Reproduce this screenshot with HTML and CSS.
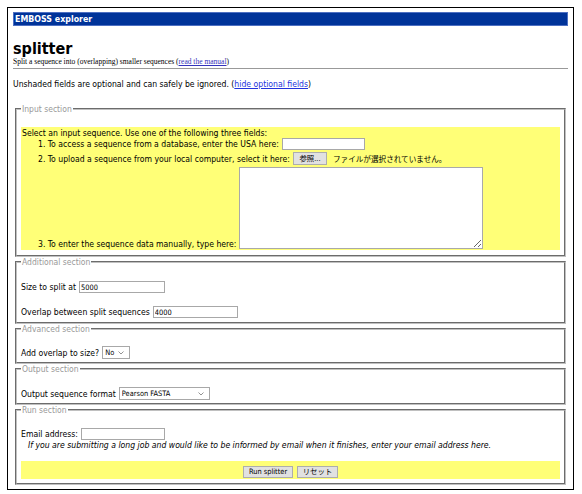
FILE: index.html
```html
<!DOCTYPE html>
<html lang="en">
<head>
<meta charset="utf-8">
<title>splitter</title>
<link rel="stylesheet" href="styles.css">
</head>
<body>
<div class="page">
  <div class="topbar">EMBOSS explorer</div>
  <h1 class="title">splitter</h1>
  <div class="subtitle">Split a sequence into (overlapping) smaller sequences (<a href="#" class="manual">read the manual</a>)</div>
  <hr class="rule">
  <p class="note">Unshaded fields are optional and can safely be ignored. (<a href="#" class="toggle">hide optional fields</a>)</p>

  <form class="form">
    <fieldset class="section section-input">
      <legend>Input section</legend>
      <div class="req input-box">
        <div class="line">Select an input sequence. Use one of the following three fields:</div>
        <div class="opt row-usa"><span>1. To access a sequence from a database, enter the USA here:</span><input class="text usa" type="text"></div>
        <div class="opt row-file"><span>2. To upload a sequence from your local computer, select it here:</span><button type="button" class="btn browse">参照...</button><span class="nofile">ファイルが選択されていません。</span></div>
        <div class="opt row-seq"><span>3. To enter the sequence data manually, type here:</span><textarea class="seq"></textarea></div>
      </div>
    </fieldset>

    <fieldset class="section section-additional">
      <legend>Additional section</legend>
      <div class="field field-first"><span>Size to split at</span><input class="text size" type="text" value="5000"></div>
      <div class="field field-second"><span>Overlap between split sequences</span><input class="text overlap" type="text" value="4000"></div>
    </fieldset>

    <fieldset class="section section-advanced">
      <legend>Advanced section</legend>
      <div class="field field-first"><span>Add overlap to size?</span>
        <span class="select select-no"><select><option>No</option><option>Yes</option></select><svg class="chev" width="6" height="4" viewBox="0 0 6 4"><path d="M0.5 0.5 L3 3 L5.5 0.5" fill="none" stroke="#777" stroke-width="0.8"/></svg></span>
      </div>
    </fieldset>

    <fieldset class="section section-output">
      <legend>Output section</legend>
      <div class="field field-first"><span>Output sequence format</span>
        <span class="select select-format"><select><option>Pearson FASTA</option></select><svg class="chev" width="6" height="4" viewBox="0 0 6 4"><path d="M0.5 0.5 L3 3 L5.5 0.5" fill="none" stroke="#777" stroke-width="0.8"/></svg></span>
      </div>
    </fieldset>

    <fieldset class="section section-run">
      <legend>Run section</legend>
      <div class="field field-first"><span>Email address:</span><input class="text email" type="text"></div>
      <div class="hint">If you are submitting a long job and would like to be informed by email when it finishes, enter your email address here.</div>
      <div class="req run-bar">
        <button type="submit" class="btn run">Run splitter</button>
        <button type="reset" class="btn reset">リセット</button>
      </div>
    </fieldset>
  </form>
</div>
</body>
</html>
```
FILE: styles.css
```css
html, body {
  margin: 0;
  padding: 0;
  background: #fff;
}

body {
  font-family: "DejaVu Sans Condensed", "DejaVu Sans", "Noto Sans CJK JP", sans-serif;
  font-stretch: condensed;
  font-size: 8.6px;
  line-height: 10px;
  color: #000;
}

.page {
  margin: 7px 0 0 7px;
  width: 567px;
  box-sizing: border-box;
  border: 1px solid #000;
  padding: 4px 5px 4px 5px;
}

.topbar {
  height: 14px;
  box-sizing: border-box;
  background: #003399;
  border: 1px solid #4d6fc2;
  color: #fff;
  font-weight: bold;
  font-size: 8.8px;
  line-height: 12px;
  padding-left: 1px;
}

.title {
  margin: 15px 0 0;
  font-size: 16px;
  line-height: 16px;
  font-weight: bold;
}

.subtitle {
  font-family: "Liberation Serif", serif;
  font-stretch: normal;
  font-size: 7.5px;
  line-height: 9px;
}

.manual {
  color: #3333bb;
}

.rule {
  margin: 2px 0 10px;
  border: 0;
  border-top: 1px solid #999;
  height: 0;
}

.note {
  margin: 0;
}

.toggle {
  color: #2233dd;
}

.form {
  margin: 15px 0 0;
}

.section {
  margin: 0 2px;
  padding: 0 4px 4px;
  border: 2px groove #c0c0c0;
  min-width: 0;
}

.section legend {
  padding: 0 1px;
  color: #999;
  font-size: 8.5px;
  line-height: 10px;
}

.section-input { padding-bottom: 5px; }
.section-additional { padding-bottom: 4px; }
.section-advanced { padding-bottom: 3px; }
.section-output { padding-bottom: 3px; }
.section-run { padding-bottom: 4px; }

.req {
  background: #ffff77;
}

.input-box {
  margin-top: 13px;
  padding: 1px 1px;
}

.line {
  white-space: nowrap;
}

.opt {
  display: flex;
  align-items: center;
  gap: 3px;
  padding-left: 16px;
  white-space: nowrap;
}

.row-usa { height: 12px; }
.row-file { margin-top: 2px; height: 13px; }
.row-seq { margin-top: 2px; align-items: flex-end; }

.text {
  height: 12px;
  box-sizing: border-box;
  border: 1px solid #a8a8a8;
  padding: 0 1px;
  margin: 0;
  background: #fff;
  font-family: "DejaVu Sans Condensed", "DejaVu Sans", sans-serif;
  font-stretch: condensed;
  font-size: 7.4px;
  color: #000;
}

.usa { width: 83px; }
.size { width: 86px; }
.overlap { width: 85px; }
.email { width: 84px; }

.btn {
  box-sizing: border-box;
  margin: 0;
  padding: 0;
  background: #e1e1e1;
  border: 1px solid #adadad;
  border-radius: 0;
  font-family: "DejaVu Sans Condensed", "DejaVu Sans", "Noto Sans CJK JP", sans-serif;
  font-stretch: condensed;
  font-size: 7.4px;
  line-height: 10px;
  color: #000;
}

.browse {
  width: 34px;
  height: 13px;
}

.nofile {
  margin-left: 3px;
  font-family: "Noto Sans CJK JP", sans-serif;
  font-size: 7.6px;
}

.seq {
  width: 244px;
  height: 82px;
  box-sizing: border-box;
  margin: 0;
  border: 1px solid #a9a9a9;
  padding: 1px;
  background: #fff;
  display: block;
}

.field {
  display: flex;
  align-items: center;
  gap: 3px;
  white-space: nowrap;
}

.section-additional .field-first { margin-top: 14px; }
.section-additional .field-second { margin-top: 13px; }
.section-advanced .field-first { margin-top: 12px; }
.section-output .field-first { margin-top: 13px; }
.section-run .field-first { margin-top: 13px; }

.select {
  display: inline-flex;
  align-items: center;
  height: 13px;
  box-sizing: border-box;
  border: 1px solid #a8a8a8;
  background: #fff;
  padding-right: 5px;
}

.select select {
  appearance: none;
  -webkit-appearance: none;
  border: 0;
  margin: 0;
  padding: 0 0 0 2px;
  height: 11px;
  background: transparent;
  font-family: "DejaVu Sans Condensed", "DejaVu Sans", sans-serif;
  font-stretch: condensed;
  font-size: 7.4px;
  line-height: 11px;
  color: #000;
  flex: 1;
  min-width: 0;
  outline: none;
}

.select-no { width: 28px; }
.select-format { width: 91px; }

.chev {
  flex: none;
  display: block;
}

.hint {
  padding-left: 7px;
  font-style: italic;
  white-space: nowrap;
}

.run-bar {
  margin-top: 11px;
  height: 18px;
  box-sizing: border-box;
  padding-top: 5px;
  display: flex;
  justify-content: center;
  align-items: flex-start;
  gap: 4px;
}

.run {
  width: 50px;
  height: 12px;
}

.reset {
  width: 41px;
  height: 12px;
}
```
